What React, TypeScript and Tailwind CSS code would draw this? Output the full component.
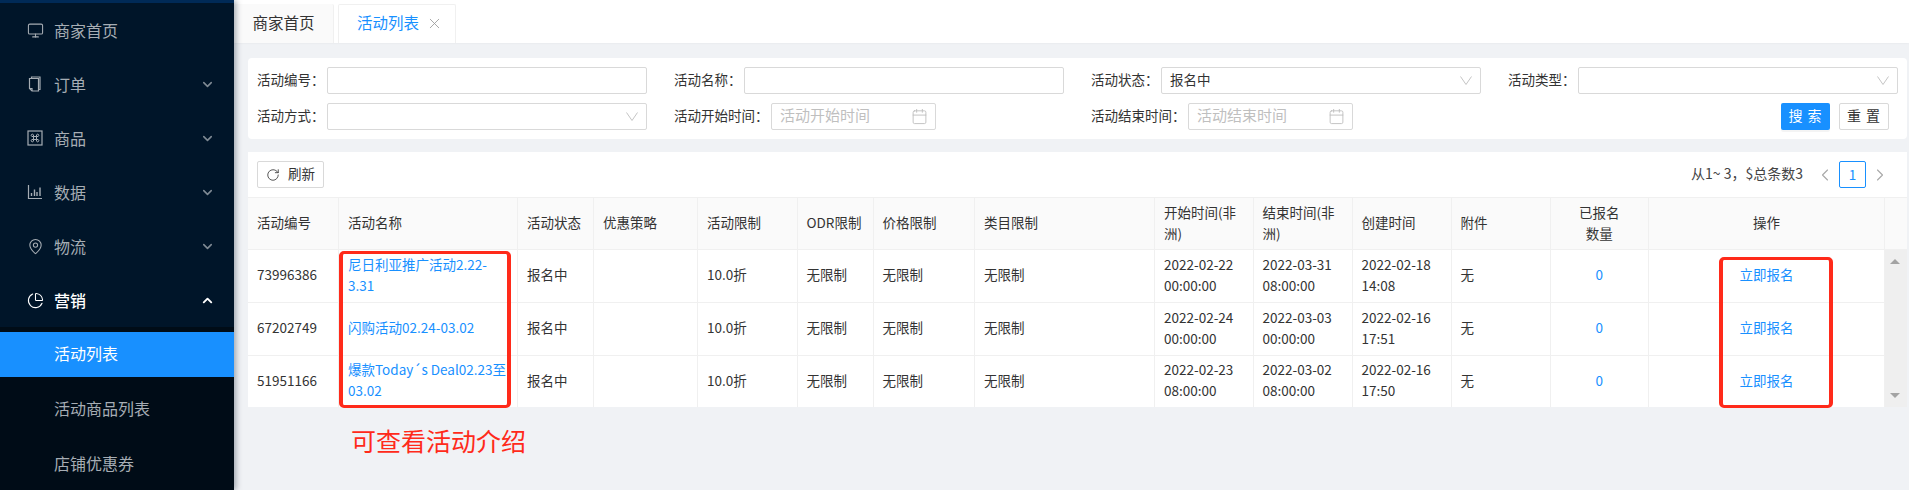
import { ChevronDown, ChevronUp, ChevronLeft, ChevronRight, Monitor, MapPin, ChartPie, RotateCw, Calendar, X } from 'lucide-react';
import clsx from 'clsx';

const FONT = "font-['Noto_Sans_CJK_SC','Noto_Sans',sans-serif]";

function OrderIcon() {
  return (
    <svg width="16" height="16" viewBox="0 0 16 16" fill="none" stroke="currentColor" strokeWidth="1.2">
      <path d="M4.5 2.5V1h8.5v12.5h-1.5" />
      <path d="M2.5 2.5h9v12.5H5l-2.5-2.5z" />
      <path d="M2.5 12.5H5V15" />
    </svg>
  );
}

function ProductIcon() {
  return (
    <svg width="16" height="16" viewBox="0 0 16 16" fill="none" stroke="currentColor" strokeWidth="1.2">
      <rect x="1" y="1" width="14" height="14" />
      <path d="M6.5 6.5h3v3h-3zM6.5 6.5H5a1.2 1.2 0 1 1 1.5-1.5zM9.5 6.5V5A1.2 1.2 0 1 1 11 6.5zM9.5 9.5H11A1.2 1.2 0 1 1 9.5 11zM6.5 9.5V11A1.2 1.2 0 1 1 5 9.5z" strokeWidth="1" />
    </svg>
  );
}

function ChartIcon() {
  return (
    <svg width="16" height="16" viewBox="0 0 16 16" fill="none" stroke="currentColor" strokeWidth="1.2">
      <path d="M1.5 1v13.5H15" />
      <path d="M4.5 12V9M7.5 12V5.5M10 12V8M13 12V3.5" strokeWidth="1.4" />
    </svg>
  );
}

const menu = [
  { label: '商家首页', icon: <Monitor size={17} strokeWidth={1.5} />, arrow: false },
  { label: '订单', icon: <OrderIcon />, arrow: true },
  { label: '商品', icon: <ProductIcon />, arrow: true },
  { label: '数据', icon: <ChartIcon />, arrow: true },
  { label: '物流', icon: <MapPin size={17} strokeWidth={1.5} />, arrow: true },
];

function Sidebar() {
  return (
    <aside className="z-10 flex h-full w-[234px] shrink-0 flex-col bg-[#001529] shadow-[2px_0_6px_rgba(0,21,41,0.35)]">
      <div className="h-[3px] shrink-0 bg-[#002a57]" />
      {menu.map((m) => (
        <div key={m.label} className="flex h-[54px] shrink-0 items-center pl-[27px] pr-[19px] text-[16px] text-[#a6adb4]">
          <span className="flex w-[27px] shrink-0 items-center">{m.icon}</span>
          <span className="flex-1">{m.label}</span>
          {m.arrow && <ChevronDown size={15} strokeWidth={2.5} className="text-[#7f8a94]" />}
        </div>
      ))}
      <div className="flex h-[54px] shrink-0 items-center pl-[27px] pr-[19px] text-[16px] font-medium text-white">
        <span className="flex w-[27px] shrink-0 items-center"><ChartPie size={17} strokeWidth={1.5} /></span>
        <span className="flex-1">营销</span>
        <ChevronUp size={15} strokeWidth={3} />
      </div>
      <div className="flex flex-1 flex-col gap-[10px] bg-[#000c17] pt-[5px] text-[16px] text-[#a6adb4]">
        <div className="flex h-[45px] shrink-0 items-center bg-[#1890ff] pb-[4px] pl-[54px] text-white">活动列表</div>
        <div className="flex h-[45px] shrink-0 items-center pb-[4px] pl-[54px]">活动商品列表</div>
        <div className="flex h-[45px] shrink-0 items-center pb-[4px] pl-[54px]">店铺优惠券</div>
      </div>
    </aside>
  );
}

function Tabs() {
  return (
    <div className="flex h-[43px] shrink-0 items-end gap-[4px] bg-white pt-[4px] shadow-[0_-1px_3px_rgba(0,0,0,0.12)]">
      <div className="flex h-full w-[100px] items-center justify-center rounded-t-[2px] border-r border-[#f0f0f0] bg-[#fafafa] pb-[2px] text-[15.5px] text-[#333]">
        商家首页
      </div>
      <div className="flex h-full w-[118px] items-center rounded-t-[2px] border border-b-0 border-[#f0f0f0] bg-white pb-[2px] pl-[18px] text-[15.5px] text-[#1890ff]">
        活动列表
        <X size={17} strokeWidth={1.2} className="ml-[7px] text-[#9a9a9a]" />
      </div>
    </div>
  );
}

function Field({ label, labelW, children }: { label: string; labelW: string; children: React.ReactNode }) {
  return (
    <div className="flex items-center">
      <span className={clsx('shrink-0 pb-[2px] text-[13.5px] text-[#333]', labelW)}>{label}：</span>
      {children}
    </div>
  );
}

function TextBox({ value, w }: { value?: string; w: string }) {
  return (
    <div className={clsx('flex h-[27px] items-center rounded-[2px] border border-[#d9d9d9] bg-white px-[8px] text-[13.5px] text-[#333]', w)}>
      {value}
    </div>
  );
}

function SelectBox({ value, w }: { value?: string; w: string }) {
  return (
    <div className={clsx('flex h-[27px] items-center justify-between rounded-[2px] border border-[#d9d9d9] bg-white pl-[8px] pr-[8px] text-[13.5px] text-[#333]', w)}>
      <span className="pb-[2px]">{value}</span>
      <svg width="12" height="9" viewBox="0 0 12 9" fill="none" stroke="#c4c4c4" strokeWidth="1">
        <path d="M0.5 0.5L6 8.5L11.5 0.5" />
      </svg>
    </div>
  );
}

function DateBox({ placeholder }: { placeholder: string }) {
  return (
    <div className="flex h-[27px] w-[165px] items-center justify-between rounded-[2px] border border-[#d9d9d9] bg-white pl-[8px] pr-[7px] text-[15px] text-[#bfbfbf]">
      <span className="pb-[2px]">{placeholder}</span>
      <Calendar size={17} strokeWidth={1.3} className="text-[#bfbfbf]" />
    </div>
  );
}

function Filters() {
  return (
    <div className="mt-[15px] grid h-[81px] shrink-0 grid-cols-[417px_417px_417px_1fr] content-start gap-y-[9px] rounded-[4px] bg-white pl-[9px] pr-[9px] pt-[9px]">
      <Field label="活动编号" labelW="w-[70px]"><TextBox w="w-[320px]" /></Field>
      <Field label="活动名称" labelW="w-[70px]"><TextBox w="w-[320px]" /></Field>
      <Field label="活动状态" labelW="w-[70px]"><SelectBox value="报名中" w="w-[320px]" /></Field>
      <Field label="活动类型" labelW="w-[70px]"><SelectBox w="w-[320px]" /></Field>
      <Field label="活动方式" labelW="w-[70px]"><SelectBox w="w-[320px]" /></Field>
      <Field label="活动开始时间" labelW="w-[97px]"><DateBox placeholder="活动开始时间" /></Field>
      <Field label="活动结束时间" labelW="w-[97px]"><DateBox placeholder="活动结束时间" /></Field>
      <div className="flex items-center justify-end gap-[9px] pr-[9px]">
        <button className="h-[27px] w-[49px] rounded-[2px] bg-[#1890ff] pb-[2px] text-[14px] tracking-[1px] text-white shadow-[0_2px_0_rgba(0,0,0,0.045)]">搜 索</button>
        <button className="h-[27px] w-[50px] rounded-[2px] border border-[#d9d9d9] bg-white pb-[2px] text-[14px] tracking-[1px] text-[#333]">重 置</button>
      </div>
    </div>
  );
}

const columns = [
  { title: '活动编号', w: 'w-[90.5px]' },
  { title: '活动名称', w: 'w-[179px]' },
  { title: '活动状态', w: 'w-[76px]' },
  { title: '优惠策略', w: 'w-[104px]' },
  { title: '活动限制', w: 'w-[99.5px]' },
  { title: 'ODR限制', w: 'w-[76px]' },
  { title: '价格限制', w: 'w-[101.5px]' },
  { title: '类目限制', w: 'w-[180px]' },
  { title: '开始时间(非洲)', w: 'w-[98.5px]' },
  { title: '结束时间(非洲)', w: 'w-[99px]' },
  { title: '创建时间', w: 'w-[99px]' },
  { title: '附件', w: 'w-[99px]' },
];

const rows = [
  { id: '73996386', name: '尼日利亚推广活动2.22-3.31', start: ['2022-02-22', '00:00:00'], end: ['2022-03-31', '08:00:00'], created: ['2022-02-18', '14:08'], h: 'h-[52.5px]' },
  { id: '67202749', name: '闪购活动02.24-03.02', start: ['2022-02-24', '00:00:00'], end: ['2022-03-03', '00:00:00'], created: ['2022-02-16', '17:51'], h: 'h-[53px]' },
  { id: '51951166', name: '爆款Today´s Deal02.23至03.02', start: ['2022-02-23', '08:00:00'], end: ['2022-03-02', '08:00:00'], created: ['2022-02-16', '17:50'], h: 'h-[51px]' },
];

const th = 'border-r border-[#f0f0f0] px-[9px] pb-[2px] font-normal leading-[21px] text-[#333]';
const td = 'border-r border-b border-[#f0f0f0] px-[9px] pb-[2px] leading-[21px] text-[#333]';

function DataTable() {
  return (
    <table className="w-[1659px] table-fixed border-collapse text-[13.5px]">
      <colgroup>
        {columns.map((c) => (
          <col key={c.title} className={c.w} />
        ))}
        <col className="w-[98.5px]" />
        <col className="w-[236px]" />
        <col className="w-[22.5px]" />
      </colgroup>
      <thead>
        <tr className="h-[52px] border-y border-[#f0f0f0] bg-[#fafafa]">
          {columns.map((c) => (
            <th key={c.title} className={clsx(th, 'text-left')}>{c.title}</th>
          ))}
          <th className={clsx(th, 'text-center')}>已报名<br />数量</th>
          <th className={clsx(th, 'text-center')}>操作</th>
          <th />
        </tr>
      </thead>
      <tbody>
        {rows.map((r, i) => (
          <tr key={r.id} className={r.h}>
            <td className={td}>{r.id}</td>
            <td className={clsx(td, 'text-[#1890ff]')}>{r.name}</td>
            <td className={td}>报名中</td>
            <td className={td} />
            <td className={td}>10.0折</td>
            <td className={td}>无限制</td>
            <td className={td}>无限制</td>
            <td className={td}>无限制</td>
            <td className={td}>{r.start[0]}<br />{r.start[1]}</td>
            <td className={td}>{r.end[0]}<br />{r.end[1]}</td>
            <td className={td}>{r.created[0]}<br />{r.created[1]}</td>
            <td className={td}>无</td>
            <td className={clsx(td, 'text-center text-[#1890ff]')}>0</td>
            <td className={clsx(td, 'text-center text-[#1890ff]')}>立即报名</td>
            {i === 0 && (
              <td rowSpan={3} className="bg-[#efefef] p-0 pr-[1.5px] align-top">
                <div className="flex h-[157px] flex-col items-center justify-between py-[9px]">
                  <span className="h-0 w-0 border-x-[5px] border-b-[5px] border-x-transparent border-b-[#a3a3a3]" />
                  <span className="h-0 w-0 border-x-[5px] border-t-[5px] border-x-transparent border-t-[#a3a3a3]" />
                </div>
              </td>
            )}
          </tr>
        ))}
      </tbody>
    </table>
  );
}

function TablePanel() {
  return (
    <div className="mt-[13px] h-[255px] shrink-0 overflow-hidden bg-white">
      <div className="flex h-[45px] items-start justify-between pl-[9px] pt-[9px]">
        <button className="flex h-[27px] w-[67px] items-center justify-center gap-[8px] rounded-[2px] border border-[#d9d9d9] text-[13.5px] text-[#333]">
          <RotateCw size={14} strokeWidth={1.4} />
          <span className="pb-[2px]">刷新</span>
        </button>
        <div className="flex items-center text-[13.5px] text-[#444]">
          <span className="w-[124px] pb-[2px] text-[14px]">从1~ 3，$总条数3</span>
          <ChevronLeft size={20} strokeWidth={1.3} className="text-[#a8a8a8]" />
          <span className="ml-[4px] flex h-[27px] w-[27px] items-center justify-center rounded-[2px] border border-[#1890ff] pb-[1px] text-[#1890ff]">1</span>
          <ChevronRight size={20} strokeWidth={1.3} className="ml-[4px] mr-[17px] text-[#a8a8a8]" />
        </div>
      </div>
      <DataTable />
    </div>
  );
}

export default function App() {
  return (
    <div className={clsx('relative flex h-[490px] w-[1909px] overflow-hidden bg-[#f0f2f5]', FONT)}>
      <Sidebar />
      <main className="flex min-w-0 flex-1 flex-col">
        <Tabs />
        <div className="flex flex-col pl-[14px] pr-[2px]">
          <Filters />
          <TablePanel />
        </div>
      </main>
      {/* red annotations drawn over the screenshot */}
      <div className="absolute left-[339px] top-[251px] h-[157px] w-[172px] rounded-[5px] border-x-[4px] border-y-[3px] border-[#ff2a1a]" />
      <div className="absolute left-[1719px] top-[257px] h-[151px] w-[114px] rounded-[5px] border-x-[4px] border-y-[3px] border-[#ff2a1a]" />
      <div className="absolute left-[351px] top-[423px] text-[25px] leading-[34px] text-[#ff2a1a]">可查看活动介绍</div>
    </div>
  );
}
